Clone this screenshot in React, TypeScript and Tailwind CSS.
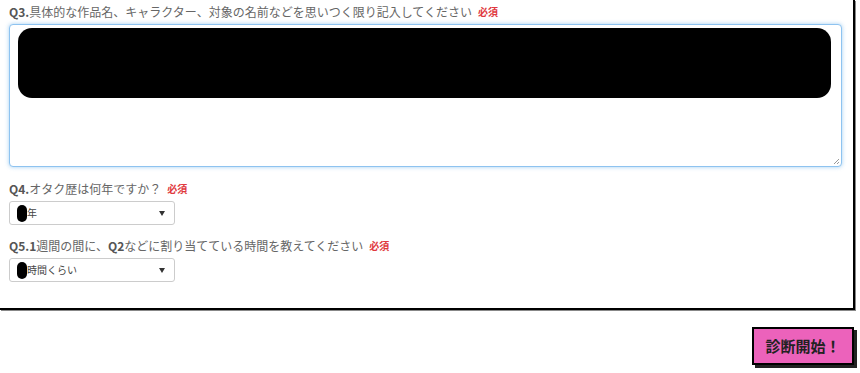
const jp = { fontFamily: '"Noto Sans CJK JP", "Noto Sans", sans-serif' };

function Required() {
  return (
    <span className="ml-[6px] text-[10px] leading-none font-bold text-[#e0393e]">
      必須
    </span>
  );
}

function Question({ no, children }: { no: string; children: React.ReactNode }) {
  return (
    <p className="flex h-[16px] items-center text-[12px] leading-none text-[#666]">
      <span className="font-bold text-[#555]">{no}</span>
      {children}
      <Required />
    </p>
  );
}

function Select({ label }: { label: string }) {
  return (
    <div className="mt-[4px] flex h-[24px] w-[166px] items-center rounded-[3px] border border-[#ccc] bg-white pl-[7px] pr-[9px] text-[10px] leading-none text-[#444]">
      <span className="h-[17px] w-[10px] rounded-full bg-black" />
      <span>{label}</span>
      <svg className="ml-auto" width="6" height="5" viewBox="0 0 6 5">
        <path d="M0 0H6L3 5Z" fill="#333" />
      </svg>
    </div>
  );
}

export default function App() {
  return (
    <div className="h-[373px] w-[860px] overflow-hidden bg-white" style={jp}>
      <div className="w-[855px] border-r-2 border-b-2 border-black bg-white pb-[26px] pl-[9px] pr-[11px] pt-[4px] shadow-[1px_1px_0_#888]">
        <Question no="Q3.">具体的な作品名、キャラクター、対象の名前などを思いつく限り記入してください</Question>
        <div className="relative mt-[4px] h-[143px] w-[833px] rounded-[4px] border border-[#8ec3f0] bg-white p-[3px] pl-[8px] shadow-[0_0_4px_rgba(102,175,233,0.6)]">
          <div className="h-[70px] w-[813px] rounded-[14px] bg-black" />
          <svg className="absolute bottom-[1px] right-[1px]" width="7" height="7" viewBox="0 0 7 7">
            <path d="M6 1L1 6M6 4L4 6" stroke="#999" strokeWidth="1" />
          </svg>
        </div>
        <div className="mt-[14px]">
          <Question no="Q4.">オタク歴は何年ですか？</Question>
          <Select label="年" />
        </div>
        <div className="mt-[13px]">
          <Question no="Q5.1">
            <span>週間の間に、</span>
            <span className="font-bold text-[#555]">Q2</span>
            <span>などに割り当てている時間を教えてください</span>
          </Question>
          <Select label="時間くらい" />
        </div>
      </div>
      <div className="flex justify-end pr-[6px] pt-[17px]">
        <button className="h-[38px] w-[102px] border-2 border-black bg-[#ec62bb] text-[15px] font-bold text-[#222] shadow-[3px_3px_0_#222]">
          診断開始！
        </button>
      </div>
    </div>
  );
}
